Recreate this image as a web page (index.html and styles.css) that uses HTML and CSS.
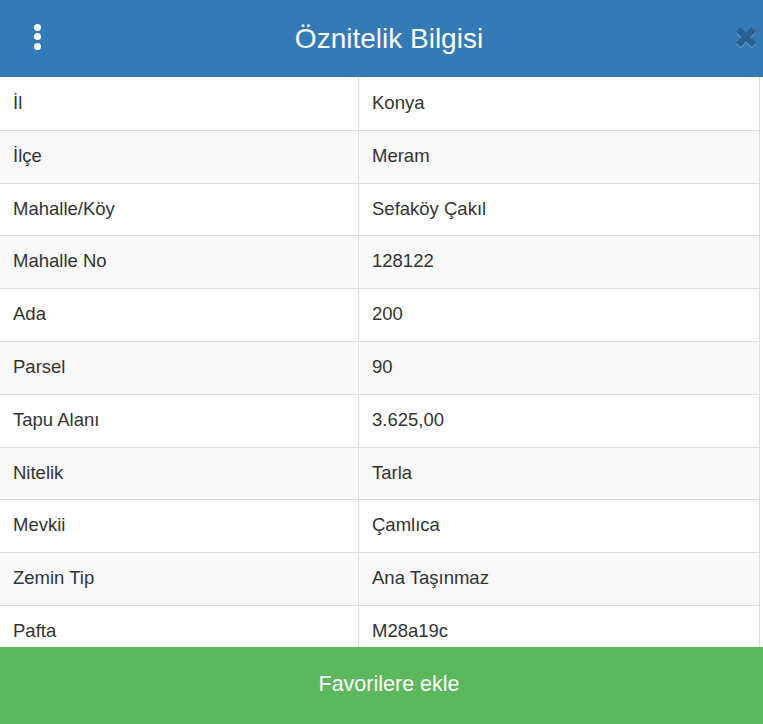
FILE: index.html
```html
<!DOCTYPE html>
<html lang="tr">
<head>
  <meta charset="UTF-8" />
  <meta name="viewport" content="width=device-width, initial-scale=1.0"/>
  <title>Öznitelik Bilgisi</title>
  <link rel="stylesheet" href="styles.css">
</head>
<body>
  <div class="panel">
    <div class="panel-header">
      <button class="menu-btn" type="button" aria-label="Menü">
        <span></span><span></span><span></span>
      </button>
      <h1>Öznitelik Bilgisi</h1>
      <button class="close-btn" type="button" aria-label="Kapat">
        <svg width="20" height="22" viewBox="0 0 20 22">
          <g transform="translate(0,1.5)" fill="#fff">
            <path d="M0 4.5 L4.5 0 L10 5.5 L15.5 0 L20 4.5 L14.5 10 L20 15.5 L15.5 20 L10 14.5 L4.5 20 L0 15.5 L5.5 10 Z"/>
          </g>
          <g fill="#000">
            <path d="M0 4.5 L4.5 0 L10 5.5 L15.5 0 L20 4.5 L14.5 10 L20 15.5 L15.5 20 L10 14.5 L4.5 20 L0 15.5 L5.5 10 Z"/>
          </g>
        </svg>
      </button>
    </div>

    <div class="panel-body">
      <table class="info-table">
        <tbody>
          <tr><td>İl</td><td>Konya</td></tr>
          <tr><td>İlçe</td><td>Meram</td></tr>
          <tr><td>Mahalle/Köy</td><td>Sefaköy Çakıl</td></tr>
          <tr><td>Mahalle No</td><td>128122</td></tr>
          <tr><td>Ada</td><td>200</td></tr>
          <tr><td>Parsel</td><td>90</td></tr>
          <tr><td>Tapu Alanı</td><td>3.625,00</td></tr>
          <tr><td>Nitelik</td><td>Tarla</td></tr>
          <tr><td>Mevkii</td><td>Çamlıca</td></tr>
          <tr><td>Zemin Tip</td><td>Ana Taşınmaz</td></tr>
          <tr><td>Pafta</td><td>M28a19c</td></tr>
        </tbody>
      </table>
    </div>

    <button class="fav-btn" type="button">Favorilere ekle</button>
  </div>
</body>
</html>
```

FILE: styles.css
```css
html, body {
  margin: 0;
  padding: 0;
  height: 100%;
}

body {
  font-family: 'Liberation Sans', Arial, sans-serif;
  color: #333;
  background: #fff;
  overflow: hidden;
}

.panel {
  display: flex;
  flex-direction: column;
  height: 724px;
}

.panel-header {
  flex: 0 0 77px;
  background: #337ab7;
  display: flex;
  align-items: center;
  justify-content: center;
  position: relative;
}

.panel-header h1 {
  margin: 0 0 0 15px;
  color: #fff;
  font-weight: normal;
  font-size: 28px;
  line-height: 1;
}

.menu-btn {
  position: absolute;
  left: 30px;
  top: 24px;
  width: 14px;
  padding: 0;
  border: 0;
  background: none;
  display: flex;
  flex-direction: column;
  align-items: center;
  gap: 2.3px;
}

.menu-btn span {
  width: 7px;
  height: 7px;
  border-radius: 50%;
  background: #fff;
}

.close-btn {
  position: absolute;
  right: 7px;
  top: 27px;
  padding: 0;
  border: 0;
  background: none;
  opacity: 0.2;
  line-height: 0;
}

.panel-body {
  flex: 1;
  overflow: hidden;
}

.info-table {
  width: 760px;
  border-collapse: collapse;
  border-right: 1px solid #ddd;
  font-size: 18.5px;
}

.info-table td {
  padding: 11px 13px 13px;
  line-height: 27.8px;
  border-top: 1px solid #ddd;
  vertical-align: top;
}

.info-table tr:first-child td {
  border-top: 0;
  padding-top: 12px;
  padding-bottom: 13px;
}

.info-table td:first-child {
  width: 332px;
  border-right: 1px solid #ddd;
}

.info-table tr:nth-child(even) {
  background: #f9f9f9;
}

.fav-btn {
  flex: 0 0 77px;
  border: 0;
  margin: 0;
  background: #5cb85c;
  color: #fff;
  font-family: 'Liberation Sans', Arial, sans-serif;
  font-size: 21.5px;
  padding: 0 0 2px 15px;
}
```
